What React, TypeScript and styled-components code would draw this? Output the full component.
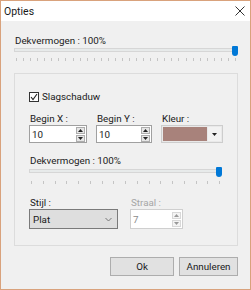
import React from 'react';
import styled, { createGlobalStyle } from 'styled-components';

const GlobalStyle = createGlobalStyle`
  html, body {
    margin: 0;
    padding: 0;
    background: #f0f0f0;
  }
  body {
    font-family: Roboto, "Noto Sans", sans-serif;
    font-size: 9.8px;
    color: #1a1a1a;
  }
`;

const Window = styled.div`
  width: 251px;
  height: 290px;
  box-sizing: border-box;
  border: 1px solid #d9a27c;
  background: #f0f0f0;
  display: flex;
  flex-direction: column;
`;

const TitleBar = styled.div`
  height: 20px;
  background: #ffffff;
  display: flex;
  align-items: center;
  justify-content: space-between;
  padding: 0 5px 0 3px;
  font-size: 10.5px;
`;

const Content = styled.div`
  padding: 0 12px 0 13px;
  display: flex;
  flex-direction: column;
`;

const Label = styled.div<{ $top?: number; $disabled?: boolean }>`
  margin-top: ${p => p.$top ?? 0}px;
  line-height: 15px;
  height: 15px;
  padding-left: 1px;
  white-space: nowrap;
  color: ${p => (p.$disabled ? '#a6a6a6' : '#1a1a1a')};
`;

const SliderBox = styled.div<{ $width: number; $top?: number }>`
  position: relative;
  width: ${p => p.$width}px;
  height: 14px;
  margin-top: ${p => p.$top ?? 0}px;
`;

const Track = styled.div`
  height: 4px;
  box-sizing: border-box;
  margin-right: 4px;
  background: #e7eaea;
  border: 1px solid #d6d6d6;
`;

const Thumb = styled.div`
  position: absolute;
  right: 0;
  top: -2px;
  width: 6px;
  height: 10px;
  background: #0078d7;
  border-radius: 1px 1px 3px 3px;
`;

const Ticks = styled.div<{ $gap: number }>`
  display: flex;
  justify-content: space-between;
  margin: ${p => p.$gap}px 2px 0 2px;
  height: 3px;
`;

const Tick = styled.span`
  width: 1px;
  height: 3px;
  background: #c4c4c4;
`;

const Slider = ({ width, ticks, gap, top }: { width: number; ticks: number; gap: number; top?: number }) => (
  <SliderBox $width={width} $top={top}>
    <Track />
    <Thumb />
    <Ticks $gap={gap}>
      {Array.from({ length: ticks }).map((_, i) => (
        <Tick key={i} />
      ))}
    </Ticks>
  </SliderBox>
);

const GroupBox = styled.div`
  margin-top: 11px;
  width: 224px;
  height: 173px;
  box-sizing: border-box;
  border: 1px solid #dcdcdc;
  padding: 17px 0 0 14px;
  display: flex;
  flex-direction: column;
`;

const CheckRow = styled.label`
  display: flex;
  align-items: center;
  gap: 3px;
  height: 12px;
  line-height: 12px;
`;

const CheckBox = styled.span`
  width: 10px;
  height: 10px;
  box-sizing: border-box;
  border: 1px solid #333;
  background: #fff;
  display: flex;
  align-items: center;
  justify-content: center;
`;

const FieldRow = styled.div<{ $top: number; $gap: number }>`
  display: flex;
  gap: ${p => p.$gap}px;
  margin-top: ${p => p.$top}px;
`;

const Field = styled.div<{ $width: number }>`
  width: ${p => p.$width}px;
  display: flex;
  flex-direction: column;
  ${Label} {
    line-height: 13px;
    height: 13px;
  }
`;

const SpinBox = styled.div<{ $height: number; $disabled?: boolean }>`
  height: ${p => p.$height}px;
  box-sizing: border-box;
  border: 1px solid ${p => (p.$disabled ? '#cfcfcf' : '#a0a0a0')};
  background: #fff;
  display: flex;
  align-items: center;
  justify-content: space-between;
  padding: 0 1px 0 2px;
  color: ${p => (p.$disabled ? '#8c8c8c' : '#1a1a1a')};
`;

const SpinButtons = styled.div`
  display: flex;
  flex-direction: column;
  gap: 1px;
`;

const SpinButton = styled.span<{ $disabled?: boolean }>`
  width: 9px;
  height: 7px;
  box-sizing: border-box;
  border: 1px solid ${p => (p.$disabled ? '#d8d8d8' : '#adadad')};
  background: ${p => (p.$disabled ? '#f4f4f4' : '#e6e6e6')};
  display: flex;
  align-items: center;
  justify-content: center;
`;

const Arrow = ({ down, color }: { down?: boolean; color: string }) => (
  <svg width="5" height="3" viewBox="0 0 5 3">
    <path d={down ? 'M0 0 H5 L2.5 3 Z' : 'M0 3 H5 L2.5 0 Z'} fill={color} />
  </svg>
);

const Spin = ({ value, disabled, height }: { value: string; disabled?: boolean; height: number }) => (
  <SpinBox $height={height} $disabled={disabled}>
    <span>{value}</span>
    <SpinButtons>
      <SpinButton $disabled={disabled}>
        <Arrow color={disabled ? '#999' : '#222'} />
      </SpinButton>
      <SpinButton $disabled={disabled}>
        <Arrow down color={disabled ? '#999' : '#222'} />
      </SpinButton>
    </SpinButtons>
  </SpinBox>
);

const ColorPicker = styled.div`
  height: 18px;
  box-sizing: border-box;
  border: 1px solid #cdcdcd;
  background: #e9e9e9;
  display: flex;
  align-items: center;
  padding: 1px;
  gap: 1px;
`;

const Swatch = styled.div`
  flex: 1;
  height: 100%;
  background: #a8827b;
`;

const DropButton = styled.div`
  width: 13px;
  height: 100%;
  background: #f2f2f2;
  display: flex;
  align-items: center;
  justify-content: center;
`;

const Select = styled.div`
  height: 20px;
  box-sizing: border-box;
  border: 1px solid #7a7a7a;
  background: #dedede;
  display: flex;
  align-items: center;
  justify-content: space-between;
  padding: 0 5px 0 3px;
`;

const Footer = styled.div`
  display: flex;
  justify-content: flex-end;
  gap: 5px;
  margin-top: 11px;
`;

const Button = styled.button<{ $width: number }>`
  width: ${p => p.$width}px;
  height: 19px;
  box-sizing: border-box;
  border: 1px solid #adadad;
  background: #e1e1e1;
  font: inherit;
  color: #1a1a1a;
  padding: 0;
`;

export default function App() {
  return (
    <>
      <GlobalStyle />
      <Window>
        <TitleBar>
          <span>Opties</span>
          <svg width="10" height="10" viewBox="0 0 10 10">
            <path d="M0.5 0.5 L9.5 9.5 M9.5 0.5 L0.5 9.5" stroke="#333" strokeWidth="1" />
          </svg>
        </TitleBar>
        <Content>
          <Label $top={12}>Dekvermogen : 100%</Label>
          <Slider width={224} ticks={32} gap={6} />
          <GroupBox>
            <CheckRow>
              <CheckBox>
                <svg width="8" height="8" viewBox="0 0 8 8">
                  <path d="M1 4 L3 6.5 L7 1" stroke="#222" strokeWidth="1.1" fill="none" />
                </svg>
              </CheckBox>
              Slagschaduw
            </CheckRow>
            <FieldRow $top={9} $gap={9}>
              <Field $width={58}>
                <Label>Begin X :</Label>
                <Spin value="10" height={18} />
              </Field>
              <Field $width={56}>
                <Label>Begin Y :</Label>
                <Spin value="10" height={18} />
              </Field>
              <Field $width={62}>
                <Label>Kleur :</Label>
                <ColorPicker>
                  <Swatch />
                  <DropButton>
                    <Arrow down color="#222" />
                  </DropButton>
                </ColorPicker>
              </Field>
            </FieldRow>
            <Label $top={10}>Dekvermogen : 100%</Label>
            <Slider width={193} ticks={17} gap={8} top={1} />
            <FieldRow $top={13} $gap={12}>
              <Field $width={89}>
                <Label>Stijl :</Label>
                <Select>
                  <span>Plat</span>
                  <svg width="7" height="5" viewBox="0 0 7 5">
                    <path d="M0.5 1 L3.5 4 L6.5 1" stroke="#777" strokeWidth="1" fill="none" />
                  </svg>
                </Select>
              </Field>
              <Field $width={53}>
                <Label $disabled>Straal :</Label>
                <Spin value="7" disabled height={20} />
              </Field>
            </FieldRow>
          </GroupBox>
          <Footer>
            <Button $width={64}>Ok</Button>
            <Button $width={59}>Annuleren</Button>
          </Footer>
        </Content>
      </Window>
    </>
  );
}
